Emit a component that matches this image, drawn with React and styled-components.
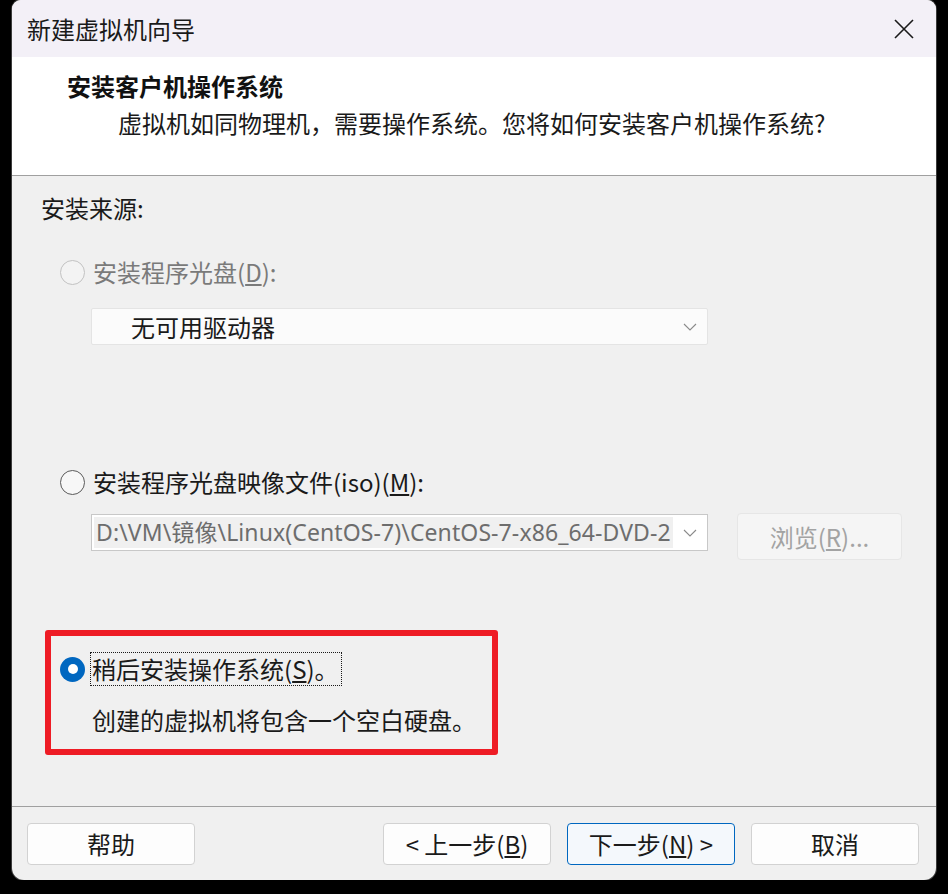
import React, { useState } from "react";
import styled, { createGlobalStyle } from "styled-components";

const GlobalStyle = createGlobalStyle`
  html, body {
    margin: 0;
    background: #000;
  }
  body {
    font-family: "Noto Sans CJK SC", "Noto Sans", sans-serif;
    color: #1a1a1a;
  }
`;

export default function App() {
  const [source, setSource] = useState("later");

  return (
    <>
      <GlobalStyle />
      <Window>
        <TitleBar>
          <span>新建虚拟机向导</span>
          <CloseButton aria-label="关闭">
            <svg width="20" height="20" viewBox="0 0 20 20">
              <path d="M1 1 L19 19 M19 1 L1 19" stroke="#1a1a1a" strokeWidth="1.6" />
            </svg>
          </CloseButton>
        </TitleBar>

        <Header>
          <HeaderTitle>安装客户机操作系统</HeaderTitle>
          <HeaderSub>虚拟机如同物理机，需要操作系统。您将如何安装客户机操作系统?</HeaderSub>
        </Header>

        <Body>
          <SectionLabel>安装来源:</SectionLabel>

          <RadioRow $disabled $top={32}>
            <Radio $disabled />
            <span>
              安装程序光盘(<u>D</u>):
            </span>
          </RadioRow>
          <Select $top={20}>
            <span>无可用驱动器</span>
            <Chevron />
          </Select>

          <RadioRow $top={121} onClick={() => setSource("iso")}>
            <Radio $checked={source === "iso"} />
            <span>
              安装程序光盘映像文件(iso)(<u>M</u>):
            </span>
          </RadioRow>
          <ComboRow>
            <Combo>
              <ComboText>D:\VM\镜像\Linux(CentOS-7)\CentOS-7-x86_64-DVD-2</ComboText>
              <Chevron />
            </Combo>
            <BrowseButton disabled>
              浏览(<u>R</u>)...
            </BrowseButton>
          </ComboRow>

          <Highlight>
            <RadioRow onClick={() => setSource("later")}>
              <Radio $checked={source === "later"} />
              <FocusLabel>
                稍后安装操作系统(<u>S</u>)。
              </FocusLabel>
            </RadioRow>
            <Note>创建的虚拟机将包含一个空白硬盘。</Note>
          </Highlight>
        </Body>

        <Footer>
          <Button>帮助</Button>
          <Spacer />
          <Button>
            &lt; 上一步(<u>B</u>)
          </Button>
          <Button $primary>
            下一步(<u>N</u>) &gt;
          </Button>
          <Button>取消</Button>
        </Footer>
      </Window>
    </>
  );
}

function Chevron() {
  return (
    <ChevronIcon width="14" height="8" viewBox="0 0 14 8">
      <path d="M1 1 L7 7 L13 1" fill="none" stroke="#8a8a8a" strokeWidth="1.1" />
    </ChevronIcon>
  );
}

const Window = styled.div`
  margin-left: 12px;
  width: 924px;
  height: 880px;
  background: #f0f0f0;
  border-radius: 9px 9px 12px 12px;
  box-shadow: 0 0 0 1px #3c3c3c;
  overflow: hidden;
  display: flex;
  flex-direction: column;
`;

const TitleBar = styled.div`
  height: 57px;
  flex: none;
  background: #f3f0f7;
  display: flex;
  align-items: center;
  justify-content: space-between;
  padding: 0 22px 0 15px;
  font-size: 24px;
  color: #1a1a1a;
`;

const CloseButton = styled.button`
  border: 0;
  background: none;
  padding: 0;
  display: flex;
`;

const Header = styled.div`
  flex: none;
  height: 119px;
  box-sizing: border-box;
  background: #fff;
  border-bottom: 1px solid #a0a0a0;
  padding-top: 13px;
`;

const HeaderTitle = styled.div`
  padding-left: 55px;
  font-size: 24px;
  font-weight: 700;
  line-height: 32px;
  color: #111;
`;

const HeaderSub = styled.div`
  padding-left: 106px;
  margin-top: 5px;
  font-size: 24px;
  line-height: 32px;
  color: #1a1a1a;
`;

const Body = styled.div`
  flex: 1;
  padding: 16px 0 0 29px;
  font-size: 24px;
  line-height: 32px;
`;

const SectionLabel = styled.div`
  color: #1a1a1a;
`;

const RadioRow = styled.div`
  display: flex;
  align-items: center;
  gap: 8px;
  margin-top: ${(p) => p.$top || 0}px;
  padding-left: 19px;
  color: ${(p) => (p.$disabled ? "#7a7a7a" : "#1a1a1a")};
  cursor: default;
`;

const Radio = styled.span`
  width: 25px;
  height: 25px;
  box-sizing: border-box;
  border-radius: 50%;
  flex: none;
  position: relative;
  background: ${(p) => (p.$checked ? "#0067c0" : p.$disabled ? "#f3f3f3" : "#f7f7f7")};
  border: ${(p) =>
    p.$checked ? "none" : p.$disabled ? "1.5px solid #c2c2c2" : "1.5px solid #5a5a5a"};

  &::after {
    content: "";
    display: ${(p) => (p.$checked ? "block" : "none")};
    position: absolute;
    left: 7.5px;
    top: 7.5px;
    width: 10px;
    height: 10px;
    border-radius: 50%;
    background: #fff;
  }
`;

const Select = styled.div`
  margin: ${(p) => p.$top}px 0 0 50px;
  width: 617px;
  height: 37px;
  box-sizing: border-box;
  background: #fbfbfb;
  border: 1px solid #e4e4e4;
  border-radius: 2px;
  display: flex;
  align-items: center;
  justify-content: space-between;
  padding: 0 10px 0 39px;
  color: #1a1a1a;
`;

const ChevronIcon = styled.svg`
  flex: none;
`;

const ComboRow = styled.div`
  display: flex;
  align-items: flex-start;
  gap: 29px;
  margin: 15px 0 0 50px;
`;

const Combo = styled.div`
  margin-top: 1px;
  width: 617px;
  height: 37px;
  box-sizing: border-box;
  background: #fff;
  border: 1px solid #c8c8c8;
  display: flex;
  align-items: center;
  gap: 10px;
  padding: 2px 10px 2px 2px;
`;

const ComboText = styled.div`
  flex: 1;
  height: 31px;
  line-height: 31px;
  background: #f0f0f0;
  color: #6d6d6d;
  white-space: nowrap;
  overflow: hidden;
  padding-left: 2px;
  font-family: "Noto Sans", "Noto Sans CJK SC", sans-serif;
  font-size: 23px;
  letter-spacing: 0.1px;
`;

const BrowseButton = styled.button`
  width: 165px;
  height: 47px;
  box-sizing: border-box;
  background: #f5f5f5;
  border: 1px solid #e6e6e6;
  border-radius: 4px;
  font-family: inherit;
  font-size: 24px;
  color: #a3a3a3;
`;

const Highlight = styled.div`
  margin: 70px 0 0 4px;
  width: 453px;
  box-sizing: border-box;
  border: 6px solid #ee1c25;
  border-radius: 3px;
  padding: 17px 0 13px 0;

  ${RadioRow} {
    padding-left: 9px;
    gap: 6px;
  }
`;

const FocusLabel = styled.span`
  outline: 1px dotted #1a1a1a;
  padding: 0 2px 0 1px;
`;

const Note = styled.div`
  margin-top: 19px;
  padding-left: 41px;
  color: #1a1a1a;
`;

const Footer = styled.div`
  flex: none;
  height: 74px;
  box-sizing: border-box;
  border-top: 1px solid #a0a0a0;
  padding: 16px 17px 15px 15px;
  display: flex;
  gap: 16px;
`;

const Spacer = styled.div`
  flex: 1;
`;

const Button = styled.button`
  width: 168px;
  height: 42px;
  box-sizing: border-box;
  border-radius: 4px;
  border: 1px solid ${(p) => (p.$primary ? "#0067c0" : "#d2d2d2")};
  background: ${(p) => (p.$primary ? "#f4f8fc" : "#fdfdfd")};
  font-family: "Noto Sans CJK SC", "Noto Sans", sans-serif;
  font-size: 24px;
  line-height: 32px;
  color: #1a1a1a;
  padding: 0;
`;
